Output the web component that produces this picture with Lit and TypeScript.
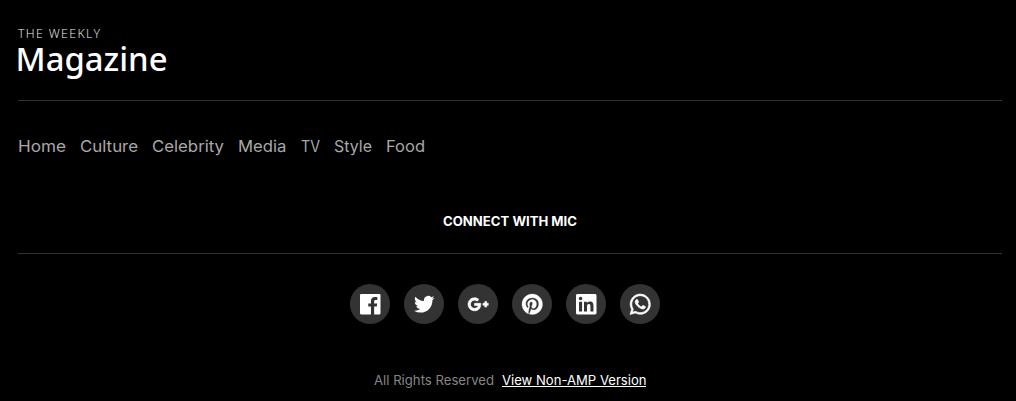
import { LitElement, html, svg, css } from "lit";
import { customElement } from "lit/decorators.js";

// A single line of text set to an exact measure.
const label = (text: string, width: number, height: number, baseline: number, cls: string, dx = 0) => html`
  <svg class="label ${cls}" width=${width} height=${height} role="text">
    <text x=${dx} y=${baseline} textLength=${width - dx} lengthAdjust="spacingAndGlyphs">${text}</text>
  </svg>`;

const NAV: [string, number][] = [
  ["Home", 48], ["Culture", 58], ["Celebrity", 72], ["Media", 48.5], ["TV", 19], ["Style", 38], ["Food", 39],
];

const ICONS = [
  { name: "Facebook", cls: "", shape: svg`<path d="M22.676 0H1.324C.593 0 0 .593 0 1.324v21.352C0 23.408.593 24 1.324 24h11.494v-9.294H9.689v-3.621h3.129V8.41c0-3.099 1.894-4.785 4.659-4.785 1.325 0 2.464.097 2.796.141v3.24h-1.921c-1.5 0-1.792.721-1.792 1.771v2.311h3.584l-.465 3.63H16.56V24h6.115c.733 0 1.325-.592 1.325-1.324V1.324C24 .593 23.408 0 22.676 0"/>` },
  { name: "Twitter", cls: "", shape: svg`<path d="M23.954 4.569a10 10 0 0 1-2.825.775 4.958 4.958 0 0 0 2.163-2.723c-.951.555-2.005.959-3.127 1.184a4.92 4.92 0 0 0-8.384 4.482C7.691 8.094 4.066 6.13 1.64 3.161a4.822 4.822 0 0 0-.666 2.475c0 1.71.87 3.213 2.188 4.096a4.904 4.904 0 0 1-2.228-.616v.061a4.923 4.923 0 0 0 3.946 4.827 4.996 4.996 0 0 1-2.212.085 4.937 4.937 0 0 0 4.604 3.417 9.868 9.868 0 0 1-6.102 2.105c-.39 0-.779-.023-1.17-.067a13.995 13.995 0 0 0 7.557 2.209c9.054 0 13.999-7.496 13.999-13.986 0-.209 0-.42-.015-.63a9.936 9.936 0 0 0 2.46-2.548z"/>` },
  { name: "Google Plus", cls: "bold", shape: svg`<path d="M7.635 10.909v2.619h4.335c-.173 1.125-1.31 3.295-4.331 3.295-2.604 0-4.731-2.16-4.731-4.823 0-2.662 2.122-4.822 4.728-4.822 1.485 0 2.479.633 3.045 1.178l2.073-1.994C11.422 5.115 9.698 4.364 7.635 4.364 3.412 4.365 0 7.785 0 12s3.414 7.635 7.635 7.635c4.41 0 7.332-3.098 7.332-7.461 0-.501-.054-.885-.12-1.265H7.635zm16.365 0h-2.183V8.726h-2.183v2.183h-2.182v2.184h2.184v2.189h2.189v-2.189H24"/>` },
  { name: "Pinterest", cls: "medium", shape: svg`<path d="M12 0C5.373 0 0 5.372 0 12c0 5.084 3.163 9.426 7.627 11.174-.105-.949-.2-2.405.042-3.441.218-.937 1.407-5.965 1.407-5.965s-.359-.719-.359-1.782c0-1.668.967-2.914 2.171-2.914 1.023 0 1.518.769 1.518 1.69 0 1.029-.655 2.568-.994 3.995-.283 1.194.599 2.169 1.777 2.169 2.133 0 3.772-2.249 3.772-5.495 0-2.873-2.064-4.882-5.012-4.882-3.414 0-5.418 2.561-5.418 5.207 0 1.031.397 2.138.893 2.738a.36.36 0 0 1 .083.345l-.333 1.36c-.053.22-.174.267-.402.161-1.499-.698-2.436-2.889-2.436-4.649 0-3.785 2.75-7.262 7.929-7.262 4.163 0 7.398 2.967 7.398 6.931 0 4.136-2.607 7.464-6.227 7.464-1.216 0-2.359-.631-2.75-1.378l-.748 2.853c-.271 1.043-1.002 2.35-1.492 3.146C9.57 23.812 10.763 24 12 24c6.627 0 12-5.373 12-12S18.627 0 12 0z"/>` },
  { name: "LinkedIn", cls: "", shape: svg`<path d="M20.447 20.452h-3.554v-5.569c0-1.328-.027-3.037-1.852-3.037-1.853 0-2.136 1.445-2.136 2.939v5.667H9.351V9h3.414v1.561h.046c.477-.9 1.637-1.85 3.37-1.85 3.601 0 4.267 2.37 4.267 5.455v6.286zM5.337 7.433a2.062 2.062 0 0 1-2.063-2.065 2.064 2.064 0 1 1 2.063 2.065zm1.782 13.019H3.555V9h3.564v11.452zM22.225 0H1.771C.792 0 0 .774 0 1.729v20.542C0 23.227.792 24 1.771 24h20.451C23.2 24 24 23.227 24 22.271V1.729C24 .774 23.2 0 22.222 0h.003z"/>` },
  { name: "WhatsApp", cls: "bold", shape: svg`<path d="M17.472 14.382c-.297-.149-1.758-.867-2.03-.967-.273-.099-.471-.148-.67.15-.197.297-.767.966-.94 1.164-.173.199-.347.223-.644.075-.297-.15-1.255-.463-2.39-1.475-.883-.788-1.48-1.761-1.653-2.059-.173-.297-.018-.458.13-.606.134-.133.298-.347.446-.52.149-.174.198-.298.298-.497.099-.198.05-.371-.025-.52-.075-.149-.669-1.612-.916-2.207-.242-.579-.487-.5-.669-.51-.173-.008-.371-.01-.57-.01-.198 0-.52.074-.792.372-.272.297-1.04 1.016-1.04 2.479 0 1.462 1.065 2.875 1.213 3.074.149.198 2.096 3.2 5.077 4.487.709.306 1.262.489 1.694.625.712.227 1.36.195 1.871.118.571-.085 1.758-.719 2.006-1.413.248-.694.248-1.289.173-1.413-.074-.124-.272-.198-.57-.347M12.05 21.785h-.004a9.87 9.87 0 0 1-5.031-1.378l-.361-.214-3.741.982.998-3.648-.235-.374a9.86 9.86 0 0 1-1.51-5.26c.001-5.45 4.436-9.884 9.888-9.884 2.64 0 5.122 1.03 6.988 2.898a9.825 9.825 0 0 1 2.893 6.994c-.003 5.45-4.437 9.884-9.885 9.884m8.413-18.297A11.815 11.815 0 0 0 12.05 0C5.495 0 .16 5.335.157 11.892c0 2.096.547 4.142 1.588 5.945L.057 24l6.305-1.654a11.882 11.882 0 0 0 5.683 1.448h.005c6.554 0 11.89-5.335 11.893-11.893a11.821 11.821 0 0 0-3.48-8.413z"/>` },
];

@customElement("app-root")
export class AppRoot extends LitElement {
  static styles = css`
    :host { display: block; }
    * { box-sizing: border-box; }
    .footer {
      height: 401px;
      padding: 24px 14px 0 18px;
      background: #000;
      color: #fff;
      font-family: Inter, "Open Sans", sans-serif;
      overflow: hidden;
    }
    a { color: inherit; text-decoration: none; display: block; }
    .label { display: block; fill: currentColor; overflow: visible; }
    .brand { height: 77px; border-bottom: 1px solid #333; }
    .kicker { font: 300 12.5px "Open Sans", sans-serif; letter-spacing: 1.4px; color: #f0f0f0; }
    .name { font: 500 33px "Noto Sans", sans-serif; }
    .nav { display: flex; gap: 14px; height: 108px; padding-top: 35px; color: #a8a8a8; }
    .item { font-size: 16px; font-weight: 400; }
    .connect { display: flex; justify-content: center; height: 45px; border-bottom: 1px solid #333; }
    .heading { font-size: 12.6px; font-weight: 700; }
    .social { display: flex; justify-content: center; gap: 14px; padding: 30px 10px 0 0; }
    .circle {
      width: 40px; height: 40px; border-radius: 50%; background: #333;
      display: flex; align-items: center; justify-content: center;
    }
    .icon { width: 20.5px; height: 20.5px; fill: #fff; display: block; overflow: visible; }
    .bold { stroke: #fff; stroke-width: 0.7; }
    .medium { stroke: #fff; stroke-width: 0.35; }
    .legal { display: flex; justify-content: center; gap: 7.5px; padding-top: 46px; color: #858585; }
    .small { font-size: 13px; font-weight: 400; }
    .version { color: #fff; height: 17px; border-bottom: 1px solid #fff; }
  `;

  render() {
    return html`
      <footer class="footer">
        <div class="brand">
          ${label("THE WEEKLY", 83.5, 16, 14, "kicker")}
          ${label("Magazine", 149.5, 40, 31, "name", -2.5)}
        </div>
        <nav class="nav">
          ${NAV.map(([text, w]) => html`<a href="#">${label(text, w, 24, 16, "item")}</a>`)}
        </nav>
        <div class="connect">${label("CONNECT WITH MIC", 134, 24, 17, "heading")}</div>
        <div class="social">
          ${ICONS.map((i) => html`
            <a class="circle" href="#" aria-label=${i.name}>
              <svg class="icon ${i.cls}" viewBox="0 0 24 24">${i.shape}</svg>
            </a>`)}
        </div>
        <div class="legal">
          ${label("All Rights Reserved", 120, 16, 15, "small")}
          <a class="version" href="#">${label("View Non-AMP Version", 144.5, 16, 15, "small")}</a>
        </div>
      </footer>`;
  }
}
